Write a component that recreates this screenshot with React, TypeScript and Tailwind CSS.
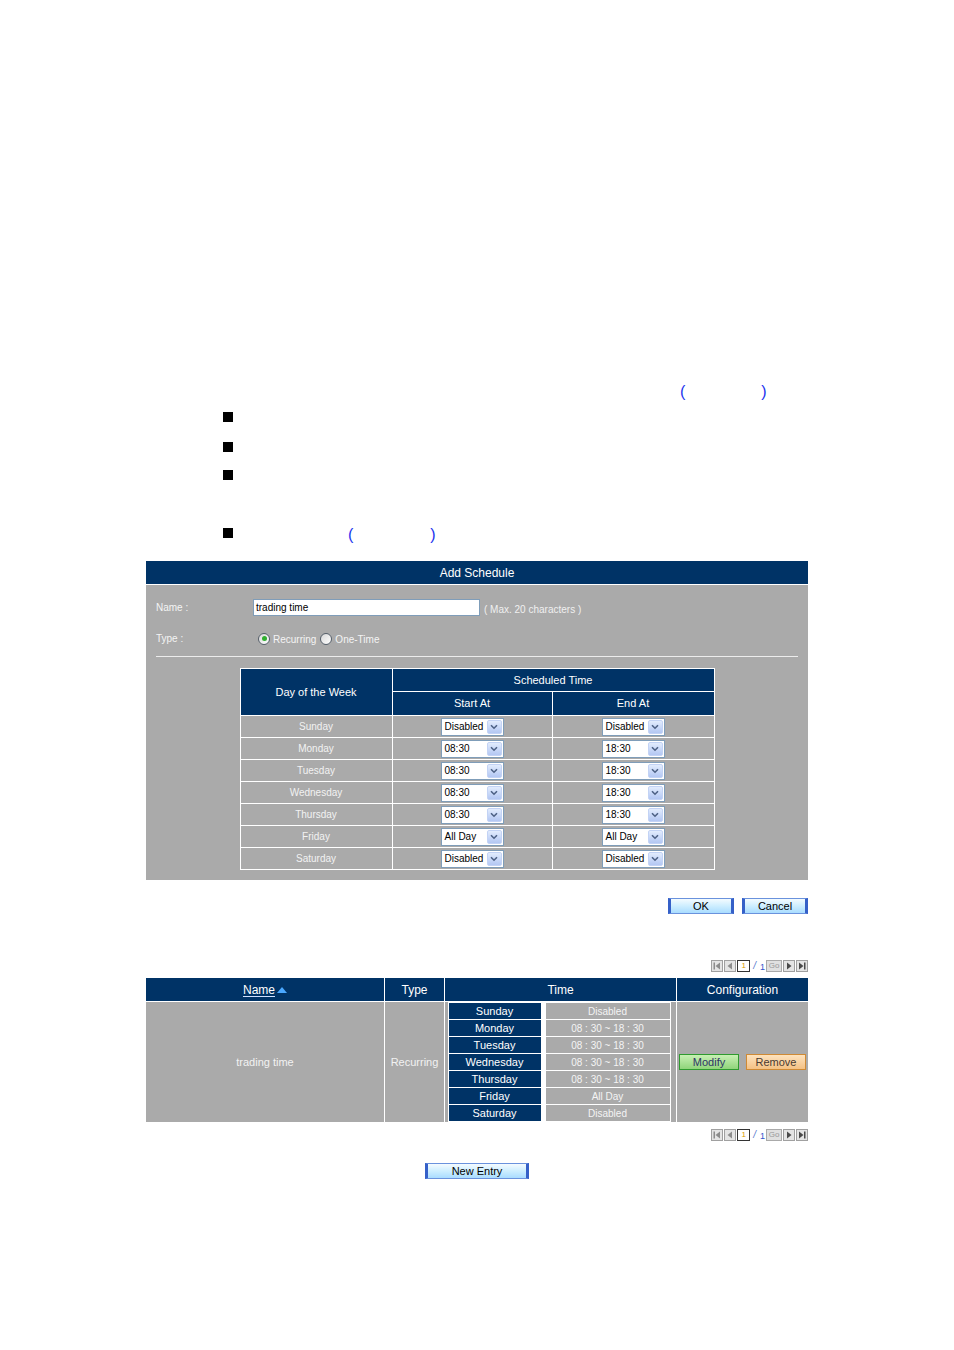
import React from "react";

const days = ["Sunday", "Monday", "Tuesday", "Wednesday", "Thursday", "Friday", "Saturday"];
const starts = ["Disabled", "08:30", "08:30", "08:30", "08:30", "All Day", "Disabled"];
const ends = ["Disabled", "18:30", "18:30", "18:30", "18:30", "All Day", "Disabled"];
const times = ["Disabled", "08 : 30 ~ 18 : 30", "08 : 30 ~ 18 : 30", "08 : 30 ~ 18 : 30", "08 : 30 ~ 18 : 30", "All Day", "Disabled"];

function Sel({ v }: { v: string }) {
  return (
    <div className="w-[63px] h-[18px] bg-white border border-[#7f9db9] flex items-center justify-between pl-[3px] pr-px">
      <span className="text-[10px] text-black leading-none">{v}</span>
      <span className="w-[15px] h-[14px] bg-gradient-to-b from-[#e2ecfd] to-[#b3c7f3] border border-[#c3d3f5] rounded-[2px] flex items-center justify-center">
        <svg width="8" height="6" viewBox="0 0 8 6">
          <path d="M1 1.2 L4 4.2 L7 1.2" stroke="#4d6185" strokeWidth="1.6" fill="none" />
        </svg>
      </span>
    </div>
  );
}

function BlueBtn({ label, w }: { label: string; w: string }) {
  return (
    <div
      className={`${w} h-[16px] bg-gradient-to-b from-[#f4fbff] via-[#cdeeff] to-[#a9dcff] border-x-[3px] border-y border-x-[#3560c8] border-y-[#6a92dd] flex items-center justify-center text-[11px] text-black leading-none`}
    >
      {label}
    </div>
  );
}

function PIcon({ kind }: { kind: "first" | "prev" | "next" | "last" }) {
  const dis = kind === "first" || kind === "prev";
  const c = dis ? "#8c8c8c" : "#4a4a4a";
  return (
    <div className="w-[12px] h-[12px] bg-[#e4e4e4] border border-[#a0a0a0] flex items-center justify-center">
      <svg width="8" height="8" viewBox="0 0 8 8">
        {kind === "first" && (
          <>
            <rect x="0.5" y="0.5" width="1.5" height="7" fill={c} />
            <path d="M7 0.5 L2.5 4 L7 7.5 Z" fill={c} />
          </>
        )}
        {kind === "prev" && <path d="M6 0.5 L1.5 4 L6 7.5 Z" fill={c} />}
        {kind === "next" && <path d="M2 0.5 L6.5 4 L2 7.5 Z" fill={c} />}
        {kind === "last" && (
          <>
            <path d="M1 0.5 L5.5 4 L1 7.5 Z" fill={c} />
            <rect x="6" y="0.5" width="1.5" height="7" fill={c} />
          </>
        )}
      </svg>
    </div>
  );
}

function Pager() {
  return (
    <div className="flex justify-end pr-[146px] h-[14px] items-center">
      <div className="flex items-center gap-px">
        <PIcon kind="first" />
        <PIcon kind="prev" />
        <div className="w-[13px] h-[12px] bg-white border border-[#333] flex items-end justify-center text-[8px] leading-none text-[#d89a00] pb-px">1</div>
        <span className="text-[10px] text-[#5577cc] italic ml-[2px] leading-none">/</span>
        <span className="text-[9px] text-[#3355cc] ml-[3px] leading-none mt-[2px]">1</span>
        <div className="w-[16px] h-[12px] bg-[#e0e0e0] border border-[#aaa] flex items-center justify-center text-[8px] text-[#999] leading-none">Go</div>
        <PIcon kind="next" />
        <PIcon kind="last" />
      </div>
    </div>
  );
}

function Radio({ on }: { on?: boolean }) {
  return (
    <span className="w-[12px] h-[12px] rounded-full border border-[#555f6a] bg-gradient-to-br from-[#d8d8d8] to-white flex items-center justify-center">
      {on && <span className="w-[5px] h-[5px] rounded-full bg-[#2fae2f]" />}
    </span>
  );
}

export default function App() {
  return (
    <div className="w-[954px] h-[1350px] bg-white font-['Liberation_Sans',Arial,sans-serif] overflow-hidden">
      {/* intro lines */}
      <div className="mt-[383px] h-[18px] flex items-center pl-[680px] text-[16px] text-[#2233ee] leading-none">
        <span>(</span>
        <span className="ml-[76px]">)</span>
      </div>
      <div className="mt-[7px] h-[18px] flex items-center pl-[223px]">
        <div className="w-[10px] h-[10px] bg-black" />
      </div>
      <div className="mt-[12px] h-[18px] flex items-center pl-[223px]">
        <div className="w-[10px] h-[10px] bg-black" />
      </div>
      <div className="mt-[10px] h-[18px] flex items-center pl-[223px]">
        <div className="w-[10px] h-[10px] bg-black" />
      </div>
      <div className="mt-[40px] h-[18px] flex items-center pl-[223px]">
        <div className="w-[10px] h-[10px] bg-black" />
        <span className="ml-[115px] mt-[4px] text-[16px] text-[#2233ee] leading-none">(</span>
        <span className="ml-[77px] mt-[4px] text-[16px] text-[#2233ee] leading-none">)</span>
      </div>

      {/* Add Schedule */}
      <div className="mt-[19px] ml-[146px] w-[662px] bg-[#aaaaaa]">
        <div className="h-[24px] bg-[#003366] border-b border-white flex items-center justify-center text-white text-[12px]">
          Add Schedule
        </div>
        <div className="px-[10px] pt-[14px] pb-[10px]">
          <div className="flex items-center h-[17px]">
            <div className="w-[97px] text-[10px] text-[#f4f4f4]">Name :</div>
            <div className="w-[227px] h-[17px] bg-white border border-[#7f9db9] flex items-center px-[2px] text-[10px] text-black">
              trading time
            </div>
            <div className="ml-[4px] mt-[3px] text-[10px] text-[#f0f0f0]">( Max. 20 characters )</div>
          </div>
          <div className="flex items-center h-[17px] mt-[14px]">
            <div className="w-[102px] text-[10px] text-[#f4f4f4]">Type :</div>
            <Radio on />
            <span className="ml-[3px] mt-px text-[10px] text-[#f4f4f4]">Recurring</span>
            <span className="ml-[4px]">
              <Radio />
            </span>
            <span className="ml-[3px] mt-px text-[10px] text-[#f4f4f4]">One-Time</span>
          </div>
          <div className="mt-[9px] h-px bg-[#ececec]" />
          <div className="mt-[11px] mx-auto w-[475px] bg-white p-px grid grid-cols-[151px_159px_161px] grid-rows-[22px_23px_repeat(7,21px)] gap-px">
            <div className="row-span-2 bg-[#003366] flex items-center justify-center text-white text-[11px]">
              Day of the Week
            </div>
            <div className="col-span-2 bg-[#003366] flex items-center justify-center text-white text-[11px]">
              Scheduled Time
            </div>
            <div className="bg-[#003366] flex items-center justify-center text-white text-[11px]">Start At</div>
            <div className="bg-[#003366] flex items-center justify-center text-white text-[11px]">End At</div>
            {days.map((d, i) => (
              <React.Fragment key={d}>
                <div className="bg-[#aaaaaa] flex items-center justify-center text-[10px] text-[#f2f2f2]">{d}</div>
                <div className="bg-[#aaaaaa] flex items-center justify-center">
                  <Sel v={starts[i]} />
                </div>
                <div className="bg-[#aaaaaa] flex items-center justify-center">
                  <Sel v={ends[i]} />
                </div>
              </React.Fragment>
            ))}
          </div>
        </div>
      </div>

      {/* OK / Cancel */}
      <div className="mt-[18px] flex justify-end pr-[146px] gap-[8px]">
        <BlueBtn label="OK" w="w-[66px]" />
        <BlueBtn label="Cancel" w="w-[66px]" />
      </div>

      <div className="mt-[45px]">
        <Pager />
      </div>

      {/* list table */}
      <div className="mt-[5px] ml-[146px] w-[662px] bg-white grid grid-cols-[238px_59px_231px_131px] grid-rows-[23px_120px] gap-px">
        <div className="bg-[#003366] flex items-center justify-center text-white text-[12px]">
          <span className="underline underline-offset-2 decoration-[#cfe0ff]">Name</span>
          <svg width="10" height="6" viewBox="0 0 10 6" className="ml-[2px]">
            <path d="M0 6 L5 0 L10 6 Z" fill="#4aa8ff" />
          </svg>
        </div>
        <div className="bg-[#003366] flex items-center justify-center text-white text-[12px]">Type</div>
        <div className="bg-[#003366] flex items-center justify-center text-white text-[12px]">Time</div>
        <div className="bg-[#003366] flex items-center justify-center text-white text-[12px]">Configuration</div>
        <div className="bg-[#aaaaaa] flex items-center justify-center text-[11px] text-[#f2f2f2]">trading time</div>
        <div className="bg-[#aaaaaa] flex items-center justify-center text-[11px] text-[#f2f2f2]">Recurring</div>
        <div className="bg-[#aaaaaa] flex items-center justify-center pr-[3px]">
          <div className="bg-white p-px grid grid-cols-[92px_124px] gap-x-[5px] gap-y-px">
            {days.map((d, i) => (
              <React.Fragment key={d}>
                <div className="h-[16px] bg-[#003366] flex items-center justify-center text-[11px] text-white">{d}</div>
                <div className="h-[16px] bg-[#aaaaaa] flex items-center justify-center text-[10px] text-[#f4f4f4]">{times[i]}</div>
              </React.Fragment>
            ))}
          </div>
        </div>
        <div className="bg-[#aaaaaa] flex items-center justify-center gap-[7px]">
          <div className="w-[60px] h-[16px] bg-gradient-to-b from-[#c8f0b4] to-[#8fd47a] border border-[#2f9a2f] flex items-center justify-center text-[11px] text-[#2e3466] leading-none">
            Modify
          </div>
          <div className="w-[60px] h-[16px] bg-gradient-to-b from-[#fde2bd] to-[#f4c184] border border-[#cf8a35] flex items-center justify-center text-[11px] text-[#4a3a30] leading-none">
            Remove
          </div>
        </div>
      </div>

      <div className="mt-[6px]">
        <Pager />
      </div>

      <div className="mt-[21px] flex justify-center">
        <BlueBtn label="New Entry" w="w-[104px]" />
      </div>
    </div>
  );
}
